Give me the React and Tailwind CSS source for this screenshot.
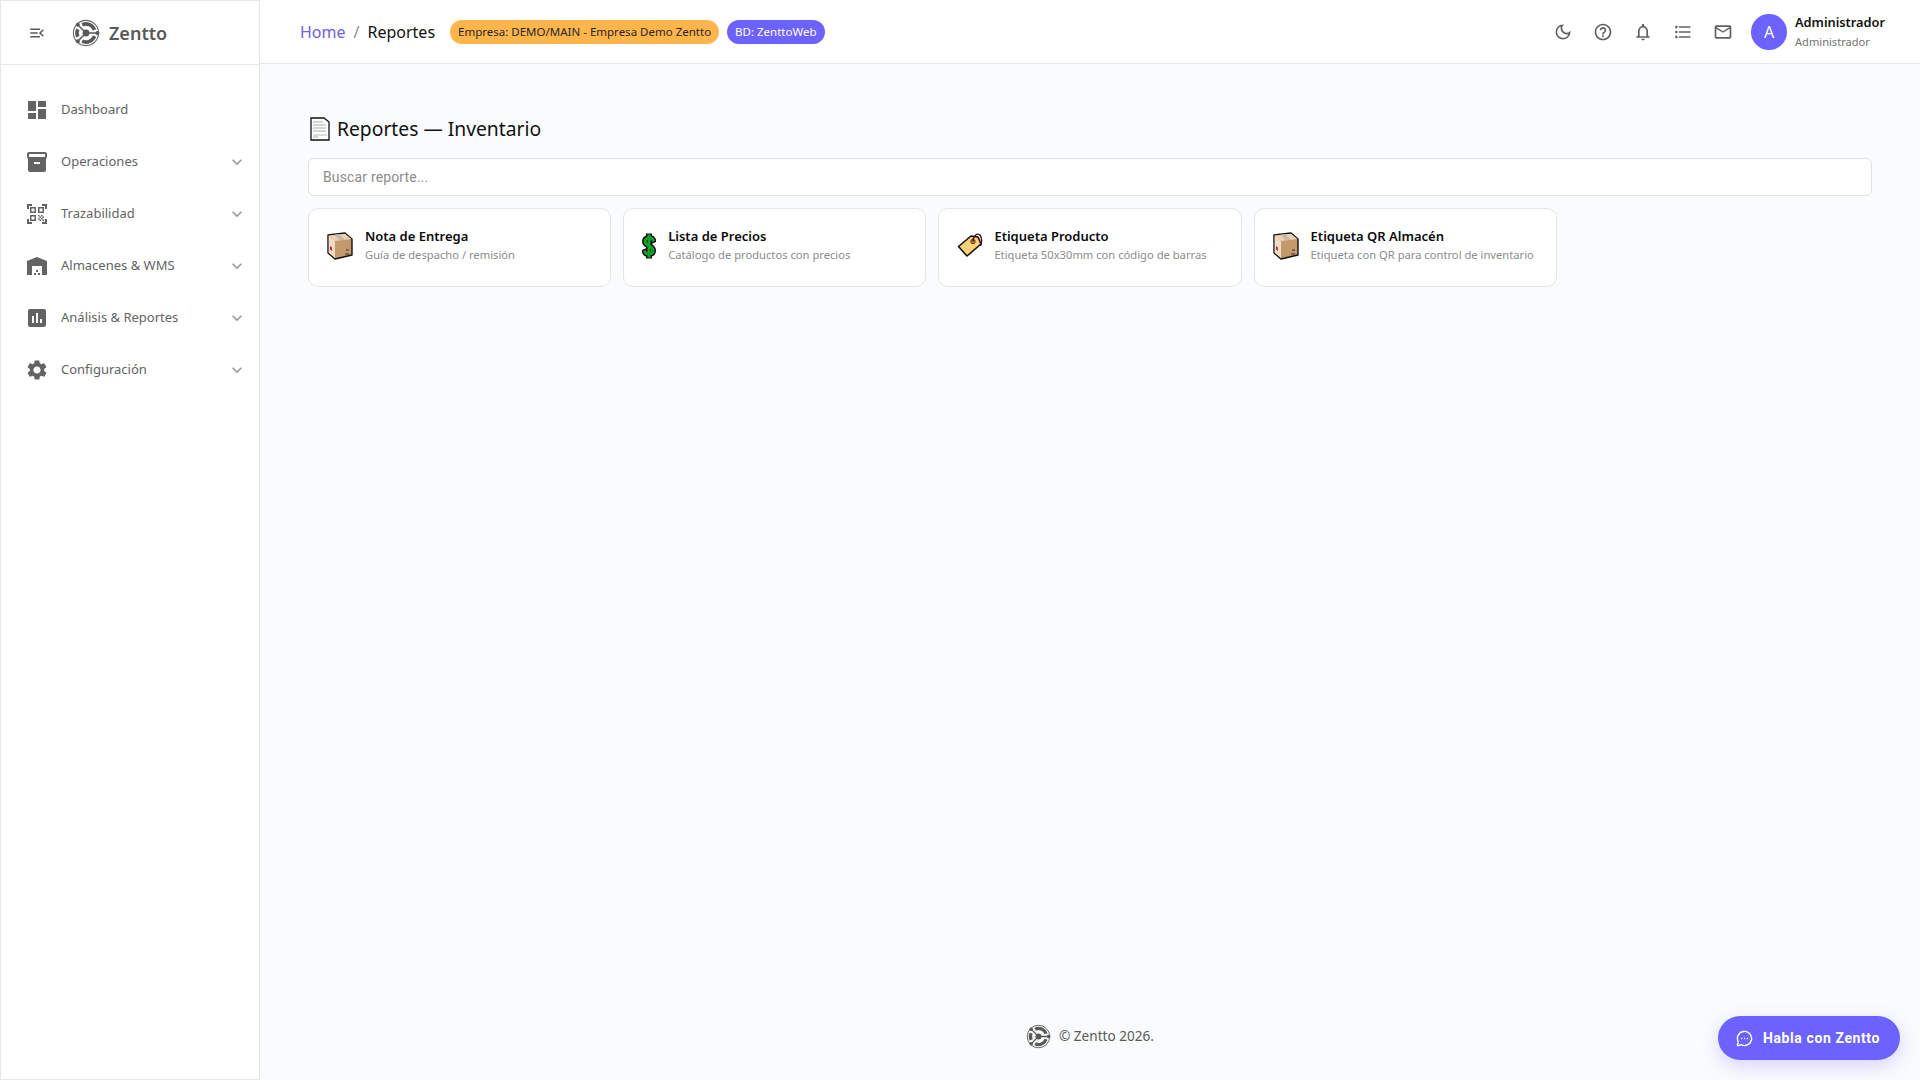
import React from 'react';
import { MdMenuOpen, MdDashboard, MdInventory2, MdQrCodeScanner, MdWarehouse, MdAssessment, MdSettings, MdExpandMore, MdOutlineDarkMode, MdHelpOutline, MdOutlineNotifications, MdFormatListBulleted, MdMailOutline } from 'react-icons/md';
import { MessageCircleMore } from 'lucide-react';

const Logo = ({ size = 28 }) => (
    <svg width={size} height={size} viewBox="0 0 28 28" fill="none">
        <circle cx="14" cy="14" r="12.6" stroke="#666" strokeWidth="1.1" />
        <path d="M10.2 5.8A9 9 0 0 1 22.5 10.9" stroke="#595959" strokeWidth="3.6" />
        <path d="M22.5 17.1A9 9 0 0 1 10.2 22.2" stroke="#595959" strokeWidth="3.6" />
        <path d="M5.8 17.8A9 9 0 0 1 5.8 10.2" stroke="#595959" strokeWidth="3.6" />
        <path d="M14 14L6 6M14 14H25M14 14L6 22" stroke="#fff" strokeWidth="3" />
        <path d="M14 14L6 6M14 14H25M14 14L6 22" stroke="#595959" strokeWidth="1.5" />
        <circle cx="14" cy="14" r="3.4" fill="#595959" />
        <circle cx="5.8" cy="5.8" r="2" fill="#595959" />
        <circle cx="25.4" cy="14" r="2" fill="#595959" />
        <circle cx="5.8" cy="22.2" r="2" fill="#595959" />
    </svg>
);

const DocIcon = () => (
    <svg width="20" height="24" viewBox="0 0 20 24" fill="none">
        <path d="M1 1H14L19 5V23H1Z" fill="#fff" stroke="#111" strokeWidth="1.3" />
        <path d="M3 5H13M3 8H16M3 11H16M3 14H16M3 20H8" stroke="#aaa" strokeWidth="1" />
        <path d="M3 18H17" stroke="#bbb" strokeWidth="1" />
    </svg>
);

const BoxIcon = () => (
    <svg width="26" height="28" viewBox="0 0 26 28" fill="none">
        <path d="M1 3L18 1L25 7V23L8 27L1 21Z" fill="#c49a6c" stroke="#111" strokeWidth="1.4" strokeLinejoin="round" />
        <path d="M1.7 3.4L18 1.7L24.3 7L8 9Z" fill="#ecd0b2" />
        <path d="M7 2.8L12 2.3L18 7.7L13 8.3Z" fill="#c2b8ac" />
        <path d="M1.7 3.4L8 9V26L1.7 20.7Z" fill="#f0dcc6" />
        <path d="M3 14L5 15.5V19L3 17.5Z" fill="#c8283c" />
        <path d="M19 18H22M18 22H22" stroke="#3a2a1a" strokeWidth="1" />
    </svg>
);

const DollarIcon = () => (
    <svg width="14" height="28" viewBox="0 0 14 28" fill="none">
        <path d="M7 1.5V26.5" stroke="#111" strokeWidth="6" />
        <path d="M11 8C10 5.5 3 5 3 9.5C3 14 11 13.5 11 18.5C11 23 4 22.5 3 20" stroke="#111" strokeWidth="6" strokeLinecap="square" />
        <path d="M7 2.5V25.5" stroke="#16a02a" strokeWidth="3" />
        <path d="M11 8C10 5.5 3 5 3 9.5C3 14 11 13.5 11 18.5C11 23 4 22.5 3 20" stroke="#16a02a" strokeWidth="3" strokeLinecap="square" />
    </svg>
);

const TagIcon = () => (
    <svg width="26" height="26" viewBox="0 0 26 26" fill="none">
        <path d="M1.5 14.5L14 4L21 5L24 12L10 24Z" fill="#fbd277" stroke="#111" strokeWidth="1.6" strokeLinejoin="round" />
        <circle cx="16" cy="9.5" r="2.2" fill="#c8881e" stroke="#5c3a10" strokeWidth="1" />
        <path d="M16 9.5C16 4 20 0.5 23 3C25 6 25 10 23.5 14" stroke="#3a1414" strokeWidth="1.4" />
    </svg>
);

const navItems = [
    { label: 'Dashboard', icon: <MdDashboard size={24} /> },
    { label: 'Operaciones', icon: <MdInventory2 size={24} />, expand: true },
    { label: 'Trazabilidad', icon: <MdQrCodeScanner size={24} />, expand: true },
    { label: 'Almacenes & WMS', icon: <MdWarehouse size={24} />, expand: true },
    { label: 'Análisis & Reportes', icon: <MdAssessment size={24} />, expand: true },
    { label: 'Configuración', icon: <MdSettings size={24} />, expand: true },
];

const reports = [
    { title: 'Nota de Entrega', desc: 'Guía de despacho / remisión', icon: <BoxIcon />, col: 'w-[38px]' },
    { title: 'Lista de Precios', desc: 'Catálogo de productos con precios', icon: <DollarIcon />, col: 'w-[26px]' },
    { title: 'Etiqueta Producto', desc: 'Etiqueta 50x30mm con código de barras', icon: <TagIcon />, col: 'w-[37px]' },
    { title: 'Etiqueta QR Almacén', desc: 'Etiqueta con QR para control de inventario', icon: <BoxIcon />, col: 'w-[38px]' },
];

const App = () => {
    return (
        <div className="flex h-[1080px] bg-[#fafbfd] font-['Noto_Sans',sans-serif] text-[#262626] overflow-hidden">
            <aside className="w-[260px] shrink-0 bg-white border border-[#e6e6e6] flex flex-col">
                <div className="h-[64px] shrink-0 border-b border-[#e6e6e6] flex items-center pl-[27px]">
                    <MdMenuOpen size={18} className="text-[#595959]" />
                    <div className="ml-[26px] flex items-center gap-[9px]">
                        <Logo />
                        <span className="text-[18px] font-semibold text-[#595959] pt-[2px]">Zentto</span>
                    </div>
                </div>
                <nav className="pt-[19px] flex flex-col">
                    {navItems.map(item => (
                        <div key={item.label} className="h-[52px] flex items-center pl-[24px] pr-[12px] text-[#636363]">
                            <span className="w-[36px] shrink-0">{item.icon}</span>
                            <span className="flex-1 text-[13px]">{item.label}</span>
                            {item.expand && <MdExpandMore size={20} className="text-[#9a9a9a]" />}
                        </div>
                    ))}
                </nav>
            </aside>

            <div className="flex-1 flex flex-col min-w-0">
                <header className="h-[64px] shrink-0 bg-white border-b border-[#e6e6e6] flex items-center pl-[40px] pr-[28px]">
                    <span className="text-[16px] text-[#6c63d9]">Home</span>
                    <span className="text-[16px] text-[#8c8c8c] mx-[8px]">/</span>
                    <span className="text-[16px] text-[#111]">Reportes</span>
                    <span className="ml-[15px] h-[24px] rounded-full bg-[#ffb54c] px-[8px] flex items-center text-[11.5px] text-[#262626]">Empresa: DEMO/MAIN - Empresa Demo Zentto</span>
                    <span className="ml-[8px] h-[24px] rounded-full bg-[#6c63ff] px-[8px] flex items-center text-[11.5px] text-white">BD: ZenttoWeb</span>
                    <div className="ml-auto flex items-center text-[#616161]">
                        <span className="w-[40px] flex justify-center"><MdOutlineDarkMode size={20} /></span>
                        <span className="w-[40px] flex justify-center"><MdHelpOutline size={20} /></span>
                        <span className="w-[40px] flex justify-center"><MdOutlineNotifications size={20} /></span>
                        <span className="w-[40px] flex justify-center"><MdFormatListBulleted size={20} /></span>
                        <span className="w-[40px] flex justify-center"><MdMailOutline size={20} /></span>
                    </div>
                    <div className="ml-[8px] w-[36px] h-[36px] rounded-full bg-[#6c63ff] flex items-center justify-center text-white text-[16px]">A</div>
                    <div className="ml-[8px] flex flex-col w-[97px]">
                        <span className="text-[12.8px] font-semibold leading-[20px] text-[#111]">Administrador</span>
                        <span className="text-[11.1px] leading-[20px] text-[#737373]">Administrador</span>
                    </div>
                </header>

                <main className="flex-1 pt-[50px] pl-[48px] pr-[48px] flex flex-col">
                    <div className="flex items-center gap-[7px] h-[30px] pl-[2px]">
                        <DocIcon />
                        <h1 className="text-[19.3px] font-normal text-[#111]">Reportes — Inventario</h1>
                    </div>
                    <input
                        placeholder="Buscar reporte..."
                        className="mt-[14px] h-[38px] w-full bg-white border border-[#e2e2e2] rounded-[6px] px-[14px] text-[14px] tracking-[0.15px] font-['Roboto',sans-serif] placeholder:text-[#8c8c8c] outline-none"
                    />
                    <div className="mt-[12px] grid grid-cols-5 gap-[12px]">
                        {reports.map(report => (
                            <div key={report.title} className="h-[79px] bg-white border border-[#e6e6e6] rounded-[10px] pl-[18px] pt-[17px] flex">
                                <span className={`${report.col} shrink-0 flex justify-start pt-[6px]`}>{report.icon}</span>
                                <div className="flex flex-col">
                                    <span className="text-[13px] font-semibold leading-[20px] text-[#0a0a0a]">{report.title}</span>
                                    <span className="text-[11.2px] leading-[17px] text-[#8c8c8c]">{report.desc}</span>
                                </div>
                            </div>
                        ))}
                    </div>
                    <footer className="mt-auto h-[56px] flex items-start justify-center gap-[8px] text-[13.6px] text-[#595959]">
                        <Logo size={25} />
                        <span className="leading-[24px]">© Zentto 2026.</span>
                    </footer>
                </main>
            </div>

            <button className="absolute left-[1718px] top-[1016px] w-[182px] h-[44px] rounded-[22px] bg-[#6c63ff] text-white flex items-center justify-center gap-[10px] pr-[2px] text-[14px] tracking-[0.6px] font-bold font-['Roboto',sans-serif] shadow-[0_6px_18px_rgba(108,99,255,0.25)]">
                <MessageCircleMore size={17} />
                Habla con Zentto
            </button>
        </div>
    );
};

export default App;
